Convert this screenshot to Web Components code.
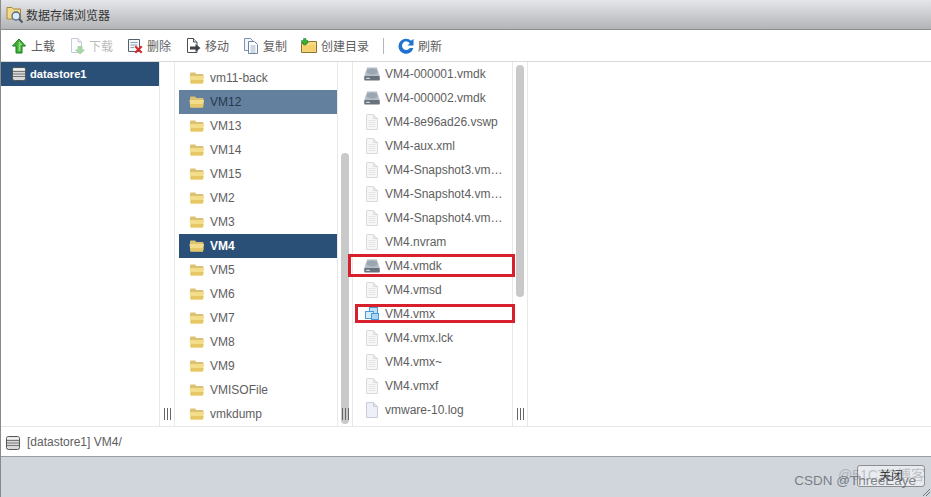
<!DOCTYPE html>
<html>
<head>
<meta charset="utf-8">
<title>数据存储浏览器</title>
<style>
  html, body { margin: 0; padding: 0; background: #fff; }
  body { font: 12px "Liberation Sans", "Noto Sans CJK SC", sans-serif; color: #5e5e5e; }
</style>
</head>
<body>
<browser-window>
  <title-bar slot="title">数据存储浏览器</title-bar>
  <tool-bar slot="tools">
    <tool-button icon="upload">上载</tool-button>
    <tool-button icon="download" disabled>下载</tool-button>
    <tool-button icon="delete">删除</tool-button>
    <tool-button icon="move">移动</tool-button>
    <tool-button icon="copy">复制</tool-button>
    <tool-button icon="newfolder">创建目录</tool-button>
    <tool-sep></tool-sep>
    <tool-button icon="refresh">刷新</tool-button>
  </tool-bar>
  <browser-column slot="columns" style="width:174px">
    <list-row icon="store" selected root>datastore1</list-row>
  </browser-column>
  <browser-column slot="columns" style="width:178px" top="4" left="4" thumb="91,271">
    <list-row icon="folder" tight>vm11-back</list-row>
    <list-row icon="folder" tight hover>VM12</list-row>
    <list-row icon="folder" tight>VM13</list-row>
    <list-row icon="folder" tight>VM14</list-row>
    <list-row icon="folder" tight>VM15</list-row>
    <list-row icon="folder" tight>VM2</list-row>
    <list-row icon="folder" tight>VM3</list-row>
    <list-row icon="folder" tight selected>VM4</list-row>
    <list-row icon="folder" tight>VM5</list-row>
    <list-row icon="folder" tight>VM6</list-row>
    <list-row icon="folder" tight>VM7</list-row>
    <list-row icon="folder" tight>VM8</list-row>
    <list-row icon="folder" tight>VM9</list-row>
    <list-row icon="folder" tight>VMISOFile</list-row>
    <list-row icon="folder" tight>vmkdump</list-row>
  </browser-column>
  <browser-column slot="columns" style="width:175px" thumb="3,232">
    <list-row icon="disk">VM4-000001.vmdk</list-row>
    <list-row icon="disk">VM4-000002.vmdk</list-row>
    <list-row icon="file">VM4-8e96ad26.vswp</list-row>
    <list-row icon="file">VM4-aux.xml</list-row>
    <list-row icon="file">VM4-Snapshot3.vm…</list-row>
    <list-row icon="file">VM4-Snapshot4.vm…</list-row>
    <list-row icon="file">VM4-Snapshot4.vm…</list-row>
    <list-row icon="file">VM4.nvram</list-row>
    <list-row icon="disk">VM4.vmdk</list-row>
    <list-row icon="file">VM4.vmsd</list-row>
    <list-row icon="vmx">VM4.vmx</list-row>
    <list-row icon="file">VM4.vmx.lck</list-row>
    <list-row icon="file">VM4.vmx~</list-row>
    <list-row icon="file">VM4.vmxf</list-row>
    <list-row icon="log">vmware-10.log</list-row>
  </browser-column>
  <status-line slot="status">[datastore1] VM4/</status-line>
  <dialog-footer slot="footer">关闭</dialog-footer>
</browser-window>

<script>
const ICONS = {
  upload: `<path d="M8 1 14.500 8H11V15H5V8H1.500Z" fill="#3fae3a" stroke="#1d7a22"/><path d="M8 3 11.500 7H9.500V13H7.500V7Z" fill="#8ede6f"/>`,
  download: `<path d="M2.500 .5H9L12.500 4V14.500H2.500Z" fill="#fbfcfd" stroke="#c5ccd6"/><path d="M9 .5V4H12.500" fill="#e4e8ee" stroke="#c5ccd6"/><path d="M9 8.500H13V12H15.500L11 16 6.500 12H9Z" fill="#a9d8a6" stroke="#8fbf8d" stroke-width=".6"/>`,
  delete: `<path d="M1.500 1.500H12.500V13.500H1.500Z" fill="#f4f6f9" stroke="#53606e"/><path d="M3.500 4.500H10.500M3.500 7H10.500M3.500 9.500H7" stroke="#8fa0b3"/><path d="M7.500 9 9 7.500 11.500 10 14 7.500 15.500 9 13 11.500 15.500 14 14 15.500 11.500 13 9 15.500 7.500 14 10 11.500Z" fill="#d42a2a"/>`,
  move: `<path d="M2.500 .5H8.500L12 4V14.500H2.500Z" fill="#fff" stroke="#4b4f55"/><path d="M8.500 .5V4H12" fill="#dfe2e6" stroke="#4b4f55"/><path d="M5 8.500H10.500V6L15.500 10 10.500 14V11.500H5Z" fill="#3f4347"/>`,
  copy: `<path d="M1.500 .5H7.500L10.500 3.500V12.500H1.500Z" fill="#f2f6fb" stroke="#7f92ab"/><path d="M5.500 3.500H11.500L14.500 6.500V15.500H5.500Z" fill="#fff" stroke="#6f84a0"/><path d="M7.500 8H12.500M7.500 10H12.500M7.500 12H12.500M7.500 14H12.500" stroke="#9cb0c9"/>`,
  newfolder: `<path d="M.5 5.500H6L7.500 3.500H15.500V14.500H.5Z" fill="#f7dc85" stroke="#8a7434"/><path d="M1.500 7H14.500V13.500H1.500Z" fill="#f4d06a"/><path d="M2.500 .5H5V2.500H7V5H5V7H2.500V5H.5V2.500H2.500Z" fill="#38b13a" stroke="#1d7a22" stroke-width=".5"/>`,
  refresh: `<path d="M15.500 1V7.500H9.500L11.800 5.200A4.300 4.300 0 1 0 11.900 10H15.300A7.500 7.500 0 1 1 8 .8C9.900 .8 11.600 1.500 12.900 2.700Z" fill="#1f72cf"/>`,
  store: `<rect x="1.500" y="1.500" width="13" height="13" rx="2" fill="#d9d9d9" stroke="#555"/><path d="M2 5.500H14M2 8H14M2 10.500H14" stroke="#777"/><path d="M2 2.500H14V4H2Z" fill="#f2f2f2"/>`,
  folder: `<path d="M1 3.500Q1 2.500 2 2.500H6L7.500 4H13.500Q14.500 4 14.500 5V6H1Z" fill="#d9c274"/><path d="M.5 6H15L14 13.500H1.500Z" fill="#f3dc8a"/><path d="M1.500 10H14.500L14 13.500H1.500Z" fill="#e5c765"/>`,
  disk: `<path d="M3 1.500H13L15.800 10.500H.2Z" fill="#b4bec8"/><ellipse cx="8" cy="5.500" rx="5.500" ry="3" fill="#9aa6b2"/><rect x=".2" y="10" width="15.600" height="4.500" rx="1" fill="#69727b"/><path d="M2 12.300H6" stroke="#e2e7ec"/>`,
  file: `<path d="M2.500 .5H9.500L13.500 4.500V15.500H2.500Z" fill="#f6f6f6" stroke="#dadada"/><path d="M9.500 .5V4.500H13.500" fill="#e8e8e8" stroke="#dadada"/><path d="M4.500 6.500H11.500M4.500 8.500H11.500M4.500 10.500H11.500M4.500 12.500H11.500" stroke="#e6e6e6"/>`,
  log: `<path d="M2.500 .5H9.500L13.500 4.500V15.500H2.500Z" fill="#eef0f7" stroke="#c8ccd8"/><path d="M9.500 .5V4.500H13.500" fill="#dde0ea" stroke="#c8ccd8"/>`,
  vmx: `<rect x="5.500" y="1.500" width="8" height="7" fill="#bfe0f7" stroke="#4a9ad6"/><rect x="1.500" y="5.500" width="8" height="7" fill="#d6ecfb" stroke="#4a9ad6"/><rect x="7.500" y="7.500" width="7" height="6" fill="#a9d4f3" stroke="#4a9ad6"/>`
}

const iconSvg = name =>
  `<svg width="16" height="16" viewBox="0 0 16 16" aria-hidden="true">${ICONS[name]}</svg>`

class BrowserWindow extends HTMLElement {
  constructor () {
    super()
    this.attachShadow({ mode: 'open' }).innerHTML = /* html */`
    <style>
      :host {
        border-left: 1px solid #8a8a8a;
        box-sizing: border-box;
        display: flex;
        flex-direction: column;
        height: 497px;
        overflow: hidden;
        position: relative;
        width: 931px;
      }
      .columns { display: flex; height: 364px; }
      .mark {
        border: 3px solid #d8202c;
        box-sizing: border-box;
        pointer-events: none;
        position: absolute;
      }
    </style>
    <slot name="title"></slot>
    <slot name="tools"></slot>
    <div class="columns"><slot name="columns"></slot></div>
    <slot name="status"></slot>
    <slot name="footer"></slot>
    <div class="mark" style="top:254px;left:347px;width:167px;height:23px"></div>
    <div class="mark" style="top:304px;left:354px;width:160px;height:19px"></div>
    `
  }
}

class TitleBar extends HTMLElement {
  constructor () {
    super()
    this.attachShadow({ mode: 'open' }).innerHTML = /* html */`
    <style>
      :host {
        align-items: center;
        background: linear-gradient(#e5e6ea, #b3b4b6);
        border-bottom: 1px solid #8e8e8e;
        box-sizing: border-box;
        color: #333;
        display: flex;
        font-family: "Noto Sans CJK SC", sans-serif;
        gap: 3px;
        height: 30px;
        padding-left: 5px;
      }
      svg { flex: none; }
    </style>
    <svg width="17" height="19" viewBox="0 0 17 19">
      <path d="M1 2.500H6L7.500 4H14.500V14H1Z" fill="#f2d98a" stroke="#a8873a"/>
      <circle cx="10" cy="11" r="4" fill="#dcebf7" stroke="#4d6b86" stroke-width="1.300"/>
      <path d="M13 14 16.500 17.500" stroke="#4d5963" stroke-width="2"/>
    </svg>
    <slot></slot>
    `
  }
}

class ToolBar extends HTMLElement {
  constructor () {
    super()
    this.attachShadow({ mode: 'open' }).innerHTML = /* html */`
    <style>
      :host {
        align-items: center;
        background: #fff;
        border-bottom: 1px solid #d9d9d9;
        box-sizing: border-box;
        display: flex;
        font-family: "Noto Sans CJK SC", sans-serif;
        gap: 14px;
        height: 32px;
        padding-left: 10px;
      }
    </style>
    <slot></slot>
    `
  }
}

class ToolButton extends HTMLElement {
  connectedCallback () {
    this.attachShadow({ mode: 'open' }).innerHTML = /* html */`
    <style>
      :host { align-items: center; color: #5e5e5e; display: flex; gap: 4px; }
      :host([disabled]) { color: #bbb; }
      svg { display: block; flex: none; }
    </style>
    ${iconSvg(this.getAttribute('icon'))}
    <slot></slot>
    `
  }
}

class ToolSep extends HTMLElement {
  constructor () {
    super()
    this.attachShadow({ mode: 'open' }).innerHTML = /* html */`
    <style>
      :host { background: #b5b5b5; display: block; height: 16px; width: 1px; }
    </style>
    `
  }
}

class BrowserColumn extends HTMLElement {
  connectedCallback () {
    const top = this.getAttribute('top') || 0
    const left = this.getAttribute('left') || 0
    const thumb = this.getAttribute('thumb')
    const [thumbTop, thumbHeight] = thumb ? thumb.split(',') : [0, 0]
    this.attachShadow({ mode: 'open' }).innerHTML = /* html */`
    <style>
      :host {
        box-sizing: border-box;
        display: flex;
        flex: none;
        height: 364px;
        overflow: hidden;
        position: relative;
      }
      .list {
        flex: 1;
        min-width: 0;
        overflow: hidden;
        padding-left: ${left}px;
        padding-top: ${top}px;
      }
      .split {
        border-left: 1px solid #e9e9e9;
        border-right: 1px solid #e9e9e9;
        box-sizing: border-box;
        flex: none;
        position: relative;
        width: 16px;
      }
      .thumb {
        background: #c9c9c9;
        border-radius: 4px;
        height: ${thumbHeight}px;
        left: 3px;
        position: absolute;
        top: ${thumbTop}px;
        width: 8px;
      }
      .grip {
        border-left: 1px solid #666;
        border-right: 1px solid #666;
        bottom: 6px;
        box-sizing: border-box;
        height: 12px;
        left: 4px;
        position: absolute;
        width: 7px;
      }
      .grip::after {
        background: #666;
        content: "";
        height: 12px;
        left: 2px;
        position: absolute;
        top: 0;
        width: 1px;
      }
    </style>
    <div class="list"><slot></slot></div>
    <div class="split">
      ${thumb ? '<div class="thumb"></div>' : ''}
      <div class="grip"></div>
    </div>
    `
  }
}

class ListRow extends HTMLElement {
  connectedCallback () {
    this.attachShadow({ mode: 'open' }).innerHTML = /* html */`
    <style>
      :host {
        align-items: center;
        box-sizing: border-box;
        color: #5e5e5e;
        display: flex;
        gap: 5px;
        height: 24px;
        padding-left: 11px;
        white-space: nowrap;
      }
      :host([tight]) { padding-left: 10px; }
      :host([selected]) { background: #2b5078; color: #fff; font-weight: bold; }
      :host([hover]) { background: #64809f; color: #26384c; }
      :host([root]) { font-size: 11.200px; gap: 3px; padding-left: 10px; }
      svg { display: block; flex: none; }
    </style>
    ${iconSvg(this.getAttribute('icon'))}
    <slot></slot>
    `
  }
}

class StatusLine extends HTMLElement {
  constructor () {
    super()
    this.attachShadow({ mode: 'open' }).innerHTML = /* html */`
    <style>
      :host {
        align-items: center;
        background: #fff;
        border-top: 1px solid #e6e6e6;
        box-sizing: border-box;
        color: #5e5e5e;
        display: flex;
        gap: 6px;
        height: 30px;
        padding-left: 4px;
      }
      svg { display: block; flex: none; margin-top: 3px; }
    </style>
    <svg width="16" height="16" viewBox="0 0 16 16">${ICONS.store}</svg>
    <slot></slot>
    `
  }
}

class DialogFooter extends HTMLElement {
  constructor () {
    super()
    this.attachShadow({ mode: 'open' }).innerHTML = /* html */`
    <style>
      :host {
        align-items: flex-start;
        background: #d0d6dc;
        border-top: 1px solid #9a9d9f;
        box-sizing: border-box;
        display: flex;
        flex: 1;
        justify-content: flex-end;
        padding: 8px 6px 0 0;
        position: relative;
      }
      .close {
        align-items: center;
        background: #e9ebee;
        border: 1px solid #8b8f94;
        border-radius: 3px;
        box-sizing: border-box;
        color: #333;
        display: flex;
        font-family: "Noto Sans CJK SC", sans-serif;
        height: 22px;
        justify-content: center;
        padding-bottom: 3px;
        width: 68px;
      }
      .mark {
        bottom: 9px;
        color: rgba(85, 90, 100, .72);
        font: 13.500px "Liberation Sans", sans-serif;
        position: absolute;
        right: 15px;
        white-space: nowrap;
      }
      .ghost {
        bottom: 13px;
        color: rgba(120, 125, 135, .4);
        font: 14px "Liberation Sans", "Noto Sans CJK SC", sans-serif;
        position: absolute;
        right: 6px;
        white-space: nowrap;
      }
      .resize { bottom: 1px; position: absolute; right: 1px; }
    </style>
    <div class="close"><slot></slot></div>
    <span class="ghost">@51CTO博客</span>
    <span class="mark">CSDN @ThreeEaye</span>
    <svg class="resize" width="8" height="8" viewBox="0 0 8 8">
      <path d="M1 8 8 1M4 8 8 4" stroke="#777"/>
    </svg>
    `
  }
}

customElements.define('browser-window', BrowserWindow)
customElements.define('title-bar', TitleBar)
customElements.define('tool-bar', ToolBar)
customElements.define('tool-button', ToolButton)
customElements.define('tool-sep', ToolSep)
customElements.define('browser-column', BrowserColumn)
customElements.define('list-row', ListRow)
customElements.define('status-line', StatusLine)
customElements.define('dialog-footer', DialogFooter)
</script>
</body>
</html>
